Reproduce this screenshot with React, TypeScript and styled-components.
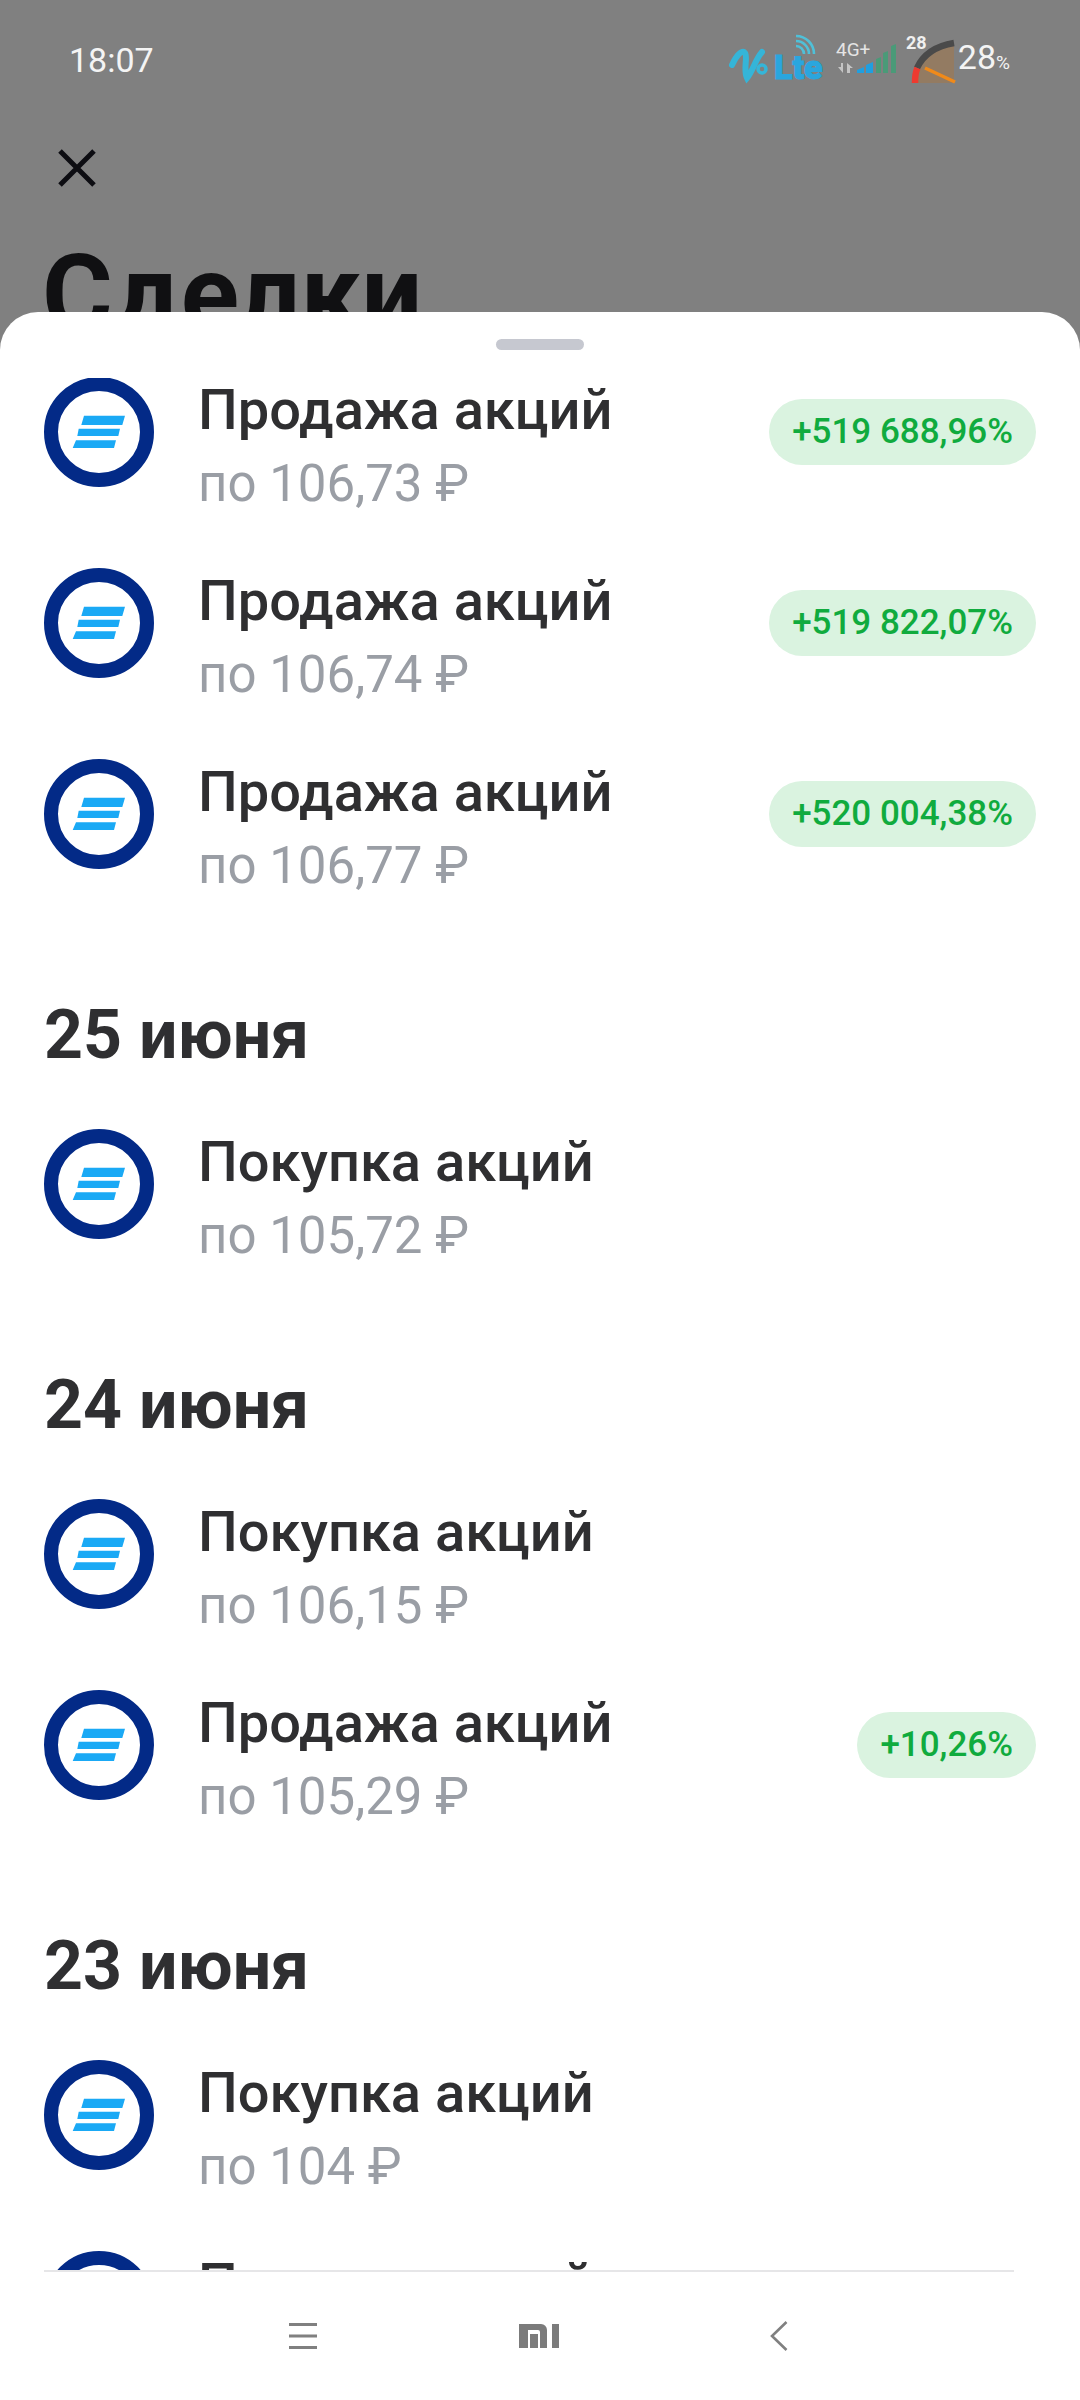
import React from 'react';
import styled, { createGlobalStyle } from 'styled-components';

const GlobalStyle = createGlobalStyle`
    html, body {
        margin: 0;
        padding: 0;
        background: #808080;
    }
    * {
        box-sizing: border-box;
    }
`;

type Deal = { title: string; price: string; profit?: string };
type Group = { date?: string; deals: Deal[] };

const sell = 'Продажа акций';
const buy = 'Покупка акций';

const groups: Group[] = [
    {
        deals: [
            { title: sell, price: 'по 106,73 ₽', profit: '+519 688,96%' },
            { title: sell, price: 'по 106,74 ₽', profit: '+519 822,07%' },
            { title: sell, price: 'по 106,77 ₽', profit: '+520 004,38%' },
        ],
    },
    { date: '25 июня', deals: [{ title: buy, price: 'по 105,72 ₽' }] },
    {
        date: '24 июня',
        deals: [
            { title: buy, price: 'по 106,15 ₽' },
            { title: sell, price: 'по 105,29 ₽', profit: '+10,26%' },
        ],
    },
    {
        date: '23 июня',
        deals: [
            { title: buy, price: 'по 104 ₽' },
            { title: buy, price: '' },
        ],
    },
];

function VolteIcon() {
    return (
        <svg width="98" height="52" viewBox="0 0 98 52" fill="none">
            <path d="M2 31C6 22 12 15 15 19C18 23 13 36 17 44C23 37 25 26 32 18" stroke="#35b5d8" strokeWidth="6" strokeLinecap="round" />
            <circle cx="32" cy="35" r="4" stroke="#35b5d8" strokeWidth="3.500" />
            <text x="44" y="45" fontFamily="Roboto, sans-serif" fontWeight="900" fontSize="34" fill="#2aa6de" stroke="#2aa6de" strokeWidth="1">Lte</text>
            <path d="M66 12A8 8 0 0 1 74 20M66 7A13 13 0 0 1 79 20M66 2A18 18 0 0 1 84 20" stroke="#4fc0d8" strokeWidth="2.600" />
        </svg>
    );
}

function SignalIcon() {
    return (
        <svg width="62" height="52" viewBox="0 0 62 52" fill="none">
            <text x="0" y="22" fontFamily="Roboto, sans-serif" fontSize="19" fill="#e4e4e4">4G+</text>
            <path d="M2 33h3v-4h2v10zM11 29l6 5h-3v5h-3z" fill="#c4c4c4" />
            <path d="M21 39v-3l7-3v6zM30 39v-8l7-3v11z" fill="#1f9fe0" />
            <path d="M40 39V25l5-2v16zM47 39V19l5-2v22zM55 39V12l5-2v29z" fill="#4a9a78" />
        </svg>
    );
}

function GaugeIcon() {
    return (
        <svg width="50" height="52" viewBox="0 0 50 52" fill="none">
            <path d="M9 49C10 30 26 13 48 9V49z" fill="#9a7a58" opacity="0.750" />
            <path d="M11 34C17 21 30 12 48 9" stroke="#4a4a4a" strokeWidth="6.500" />
            <path d="M9 49c0-6 .6-11 2.400-15" stroke="#ee3a30" strokeWidth="6.500" />
            <path d="M19 34l30 14" stroke="#f08a1a" strokeWidth="3.500" />
            <text x="0" y="15" fontFamily="Roboto, sans-serif" fontWeight="700" fontSize="18" fill="#f0f0f0">28</text>
        </svg>
    );
}

function CloseIcon() {
    return (
        <svg width="38" height="38" viewBox="0 0 38 38" fill="none">
            <path d="M2 2l34 34M36 2L2 36" stroke="#0d0d12" strokeWidth="5" />
        </svg>
    );
}

function FundLogo() {
    return (
        <svg width="110" height="110" viewBox="0 0 110 110">
            <circle cx="55" cy="55" r="48" fill="#fff" stroke="#032a87" strokeWidth="14" />
            <path d="M40 38.700H81L78.300 48H37.300zM34.700 51.700H76L74.300 59H33.300zM32 63.300H72L70 71H28.700z" fill="#1aa9f5" />
        </svg>
    );
}

function MenuIcon() {
    return (
        <svg width="28" height="26" viewBox="0 0 28 26">
            <path d="M0 1.500h28M0 13h28M0 24.500h28" stroke="#808080" strokeWidth="3" />
        </svg>
    );
}

function MiIcon() {
    return (
        <svg width="40" height="24" viewBox="0 0 40 24">
            <path d="M0 0h22a6 6 0 0 1 6 6v18h-7V8a2 2 0 0 0-2-2H9v18H0zM11 10h8v14h-8zM33 0h7v24h-7z" fill="#7b7b7b" />
        </svg>
    );
}

function BackIcon() {
    return (
        <svg width="18" height="30" viewBox="0 0 18 30" fill="none">
            <path d="M16.500 1L2 15l14.500 14" stroke="#808080" strokeWidth="2.600" />
        </svg>
    );
}

export default function App() {
    return (
        <>
            <GlobalStyle />
            <Screen>
                <Backdrop>
                    <StatusBar>
                        <Time>18:07</Time>
                        <StatusIcons>
                            <VolteIcon />
                            <SignalIcon />
                            <GaugeIcon />
                            <Battery>28<small>%</small></Battery>
                        </StatusIcons>
                    </StatusBar>
                    <CloseRow><CloseIcon /></CloseRow>
                    <PageTitle>Сделки</PageTitle>
                </Backdrop>
                <Sheet>
                    <Handle />
                    <List>
                        {groups.map((group, i) => (
                            <DealGroup key={i} $first={i === 0}>
                                {group.date && <DateTitle>{group.date}</DateTitle>}
                                <Rows>
                                    {group.deals.map((deal, j) => (
                                        <Row key={j}>
                                            <FundLogo />
                                            <RowText>
                                                <DealTitle>{deal.title}</DealTitle>
                                                <DealPrice>{deal.price}</DealPrice>
                                            </RowText>
                                            {deal.profit && <Profit>{deal.profit}</Profit>}
                                        </Row>
                                    ))}
                                </Rows>
                            </DealGroup>
                        ))}
                    </List>
                    <NavBar>
                        <MenuIcon />
                        <MiIcon />
                        <BackIcon />
                    </NavBar>
                </Sheet>
            </Screen>
        </>
    );
}

const Screen = styled.div`
    width: 1080px;
    height: 2400px;
    overflow: hidden;
    background: #808080;
    font-family: Roboto, "Liberation Sans", sans-serif;
`;

const Backdrop = styled.div`
    height: 312px;
    padding-top: 34px;
    overflow: hidden;
`;

const StatusBar = styled.div`
    display: flex;
    align-items: center;
    justify-content: space-between;
    height: 52px;
    padding: 0 70px 0 69px;
`;

const Time = styled.div`
    font-size: 34px;
    color: #f4f4f4;
`;

const StatusIcons = styled.div`
    display: flex;
    align-items: center;
    gap: 8px;
    svg {
        overflow: visible;
    }
`;

const Battery = styled.div`
    margin-left: -6px;
    font-size: 34px;
    line-height: 38px;
    color: #f4f4f4;
    small {
        font-size: 19px;
    }
`;

const CloseRow = styled.div`
    display: flex;
    height: 38px;
    margin: 63px 0 0 58px;
`;

const PageTitle = styled.h1`
    margin: 48px 0 0 42px;
    font-size: 108px;
    line-height: 118px;
    font-weight: 700;
    color: #101012;
`;

const Sheet = styled.div`
    display: flex;
    flex-direction: column;
    height: 2088px;
    border-radius: 38px 38px 0 0;
    background: #fff;
`;

const Handle = styled.div`
    flex: none;
    width: 88px;
    height: 11px;
    margin: 27px auto 28px;
    border-radius: 6px;
    background: #c6c8d0;
`;

const List = styled.div`
    flex: 1;
    min-height: 0;
    overflow: hidden;
    padding: 0 44px;
`;

const DealGroup = styled.section<{ $first: boolean }>`
    margin-top: ${(props) => (props.$first ? '-1px' : '136px')};
`;

const DateTitle = styled.h2`
    margin: 0 0 64px;
    font-size: 68px;
    line-height: 60px;
    font-weight: 700;
    color: #2f2f31;
`;

const Rows = styled.div`
    display: flex;
    flex-direction: column;
    gap: 81px;
`;

const Row = styled.div`
    display: flex;
    align-items: center;
    height: 110px;
    svg {
        flex: none;
    }
`;

const RowText = styled.div`
    flex: 1;
    min-width: 0;
    align-self: flex-start;
    margin: -3px 0 0 44px;
`;

const DealTitle = styled.div`
    font-size: 56px;
    line-height: 73px;
    font-weight: 500;
    color: #2f2f31;
    white-space: nowrap;
`;

const DealPrice = styled.div`
    font-size: 51px;
    line-height: 73px;
    color: #9a9ea5;
    white-space: nowrap;
`;

const Profit = styled.div`
    flex: none;
    height: 66px;
    padding: 0 23px;
    border-radius: 33px;
    font-size: 35px;
    line-height: 66px;
    font-weight: 500;
    color: #10ab3e;
    background: #daf3e0;
`;

const NavBar = styled.div`
    flex: none;
    display: grid;
    grid-template-columns: 230px 251px auto;
    align-items: center;
    height: 130px;
    margin: 0 66px 0 44px;
    padding-left: 245px;
    border-top: 2px solid #e6e6e8;
    background: #fff;
`;
